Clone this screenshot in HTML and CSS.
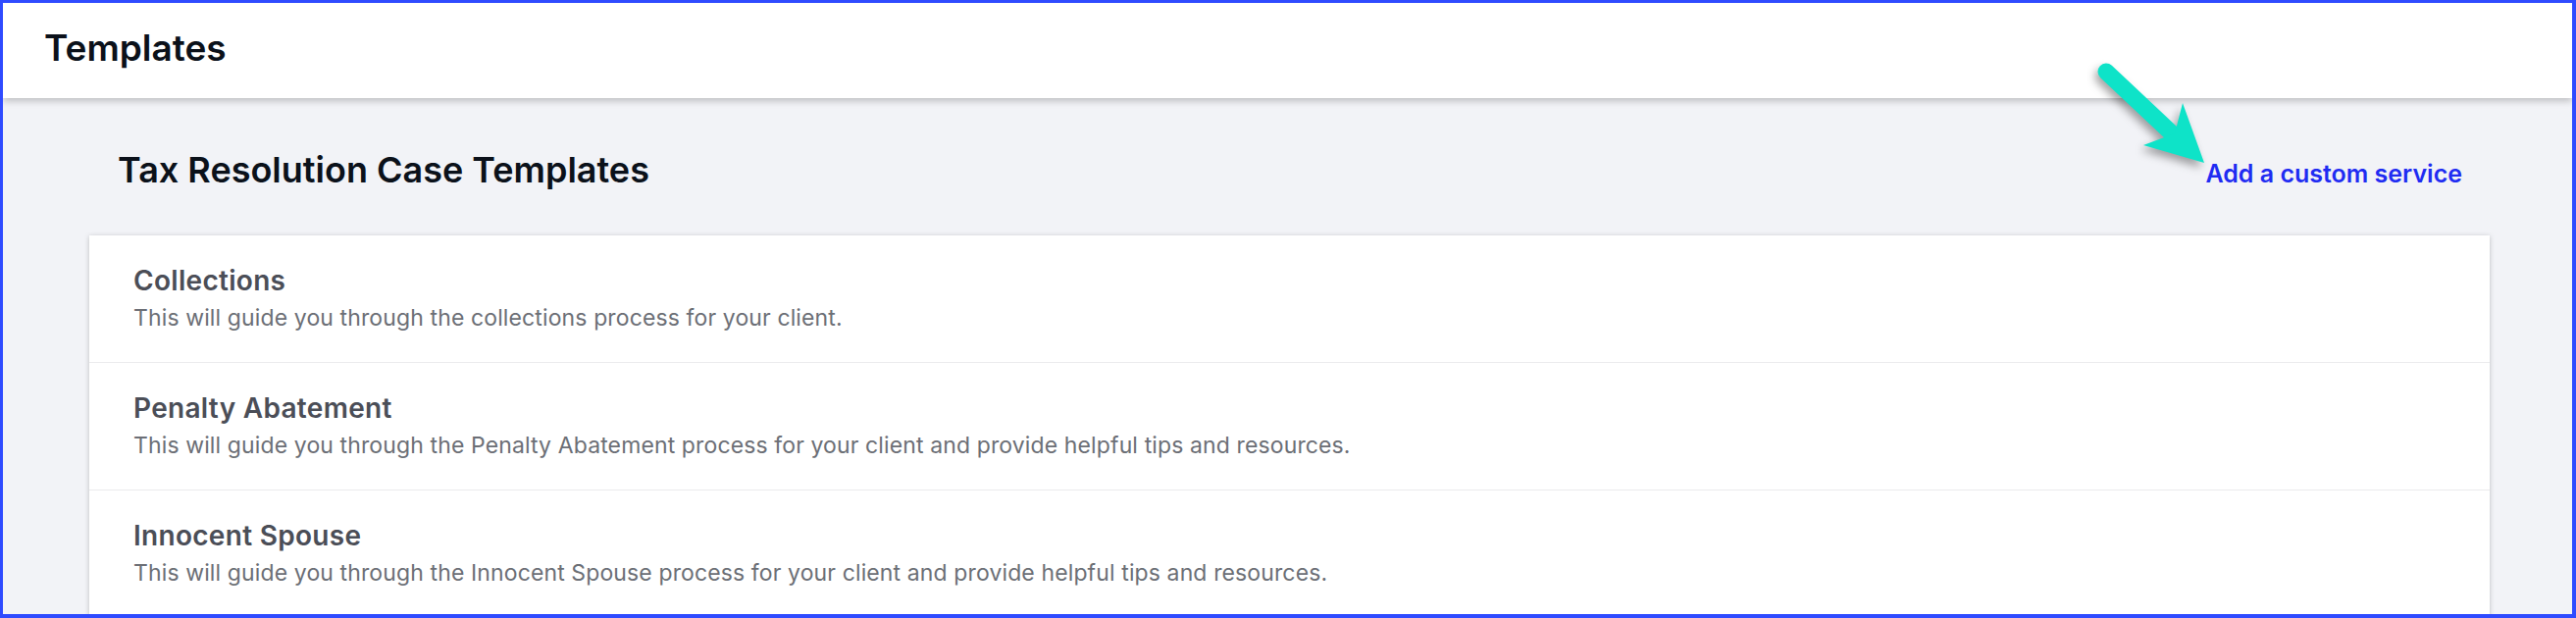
FILE: index.html
```html
<!DOCTYPE html>
<html lang="en">
<head>
<meta charset="utf-8">
<title>Templates</title>
<link rel="stylesheet" href="styles.css">
</head>
<body>
<div class="frame">
  <header class="topbar">
    <h1 class="page-title">Templates</h1>
  </header>
  <main class="content">
    <div class="section-head">
      <h2 class="section-title">Tax Resolution Case Templates</h2>
      <a class="custom-link" href="#">Add a custom service</a>
    </div>
    <div class="card">
      <div class="row">
        <div class="row-title">Collections</div>
        <div class="row-desc">This will guide you through the collections process for your client.</div>
      </div>
      <div class="row">
        <div class="row-title">Penalty Abatement</div>
        <div class="row-desc">This will guide you through the Penalty Abatement process for your client and provide helpful tips and resources.</div>
      </div>
      <div class="row">
        <div class="row-title">Innocent Spouse</div>
        <div class="row-desc">This will guide you through the Innocent Spouse process for your client and provide helpful tips and resources.</div>
      </div>
    </div>
  </main>
  <svg class="pointer" width="140" height="130" viewBox="0 0 140 130" aria-hidden="true">
    <line x1="17" y1="13" x2="84" y2="76" stroke="#0ee3c8" stroke-width="17" stroke-linecap="round"/>
    <path d="M117 106 L95 45 L87 76 L55 88 Z" fill="#0ee3c8"/>
  </svg>
</div>
</body>
</html>
```
FILE: styles.css
```css
html, body {
  margin: 0;
  padding: 0;
  height: 100%;
  overflow: hidden;
}
body {
  font-family: Inter, "Noto Sans", "Liberation Sans", sans-serif;
  background: #2f4bff;
}
.frame {
  position: relative;
  box-sizing: border-box;
  height: 630px;
  border-style: solid;
  border-color: #2f4bff;
  border-width: 3px 4px 4px 3px;
  background: #f2f3f7;
  overflow: hidden;
}
.topbar {
  position: relative;
  z-index: 1;
  box-sizing: border-box;
  height: 97px;
  padding: 24px 42px 0;
  background: #ffffff;
  box-shadow: 0 3px 7px rgba(0, 0, 0, 0.22);
}
.page-title {
  margin: 0;
  font-size: 37px;
  line-height: 44px;
  font-weight: 600;
  color: #0b111a;
}
.content {
  padding: 51px 84px 0 88px;
}
.section-head {
  display: flex;
  align-items: baseline;
  justify-content: space-between;
  padding: 0 28px 0 29px;
  margin-bottom: 45px;
}
.section-title {
  margin: 0;
  font-size: 36px;
  line-height: 44px;
  font-weight: 600;
  color: #0b111a;
}
.custom-link {
  font-size: 25px;
  font-weight: 600;
  color: #1f2cf2;
  text-decoration: none;
}
.card {
  background: #ffffff;
  box-shadow: 0 1px 5px rgba(0, 0, 0, 0.22);
}
.row {
  padding: 30px 45px 31px;
  border-bottom: 1px solid #ebebed;
}
.row-title {
  font-size: 28px;
  line-height: 32px;
  font-weight: 600;
  letter-spacing: 0.3px;
  color: #4b4e57;
}
.row-desc {
  margin-top: 8px;
  font-size: 23px;
  line-height: 28px;
  letter-spacing: 0.12px;
  color: #6c6f76;
}
.pointer {
  position: absolute;
  left: 2127px;
  top: 57px;
  z-index: 2;
  filter: drop-shadow(-3px 5px 4px rgba(0, 0, 0, 0.35));
}
```
